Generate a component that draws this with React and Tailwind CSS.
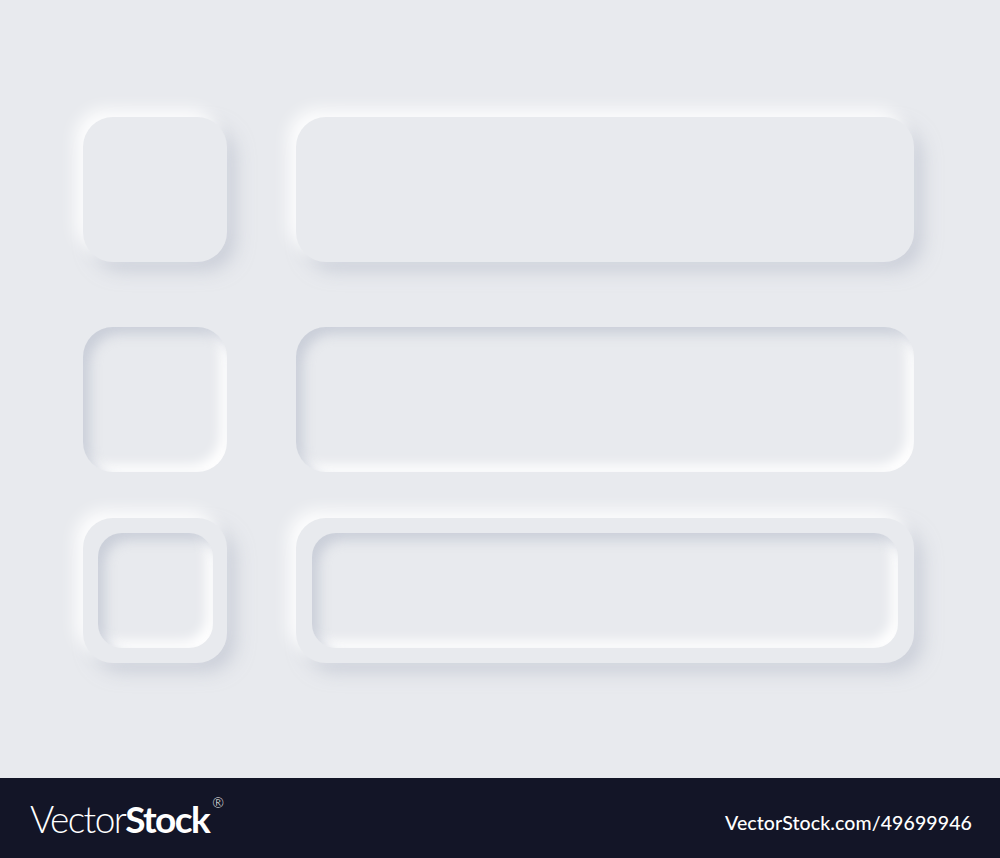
const raised =
  'bg-[#e8eaee] shadow-[-8px_-8px_16px_rgba(255,255,255,0.9),9px_9px_18px_rgba(180,185,200,0.55)]';
const inset =
  'bg-[#e8eaee] shadow-[inset_7px_7px_12px_rgba(190,195,208,0.7),inset_-7px_-7px_12px_#ffffff]';

const Row = ({ kind, className = '' }) => {
  if (kind === 'framed') {
    return (
      <div className={`flex gap-[69px] ${className}`}>
        <div className={`flex h-[145px] w-[144px] items-center justify-center rounded-[30px] ${raised}`}>
          <div className={`h-[115px] w-[115px] rounded-[24px] ${inset}`} />
        </div>
        <div className={`flex h-[145px] w-[618px] items-center px-[16px] rounded-[30px] ${raised}`}>
          <div className={`h-[115px] flex-1 rounded-[24px] ${inset}`} />
        </div>
      </div>
    );
  }
  const style = kind === 'raised' ? raised : inset;
  return (
    <div className={`flex gap-[69px] ${className}`}>
      <div className={`h-[145px] w-[144px] rounded-[30px] ${style}`} />
      <div className={`h-[145px] w-[618px] rounded-[30px] ${style}`} />
    </div>
  );
};

export default function App() {
  return (
    <div className="flex h-[858px] w-[1000px] flex-col bg-[#e8eaee]">
      {/* Neumorphic shapes */}
      <main className="flex-1 pl-[83px] pt-[117px]">
        <Row kind="raised" />
        <Row kind="inset" className="mt-[65px]" />
        <Row kind="framed" className="mt-[46px]" />
      </main>

      {/* Footer */}
      <footer className="flex h-[80px] items-center justify-between bg-[#131527] pl-[30px] pr-[28px] text-white">
        <div className="flex items-start font-['Lato',sans-serif] text-[37px] leading-none tracking-[-1.6px]">
          <span className="font-light">Vector</span>
          <span className="font-bold">Stock</span>
          <span className="ml-[3px] mt-[-4px] text-[14px] font-light">®</span>
        </div>
        <div className="font-['Lato',sans-serif] text-[19.5px] font-medium tracking-[0.1px] pt-[10px]">
          VectorStock.com/49699946
        </div>
      </footer>
    </div>
  );
}
